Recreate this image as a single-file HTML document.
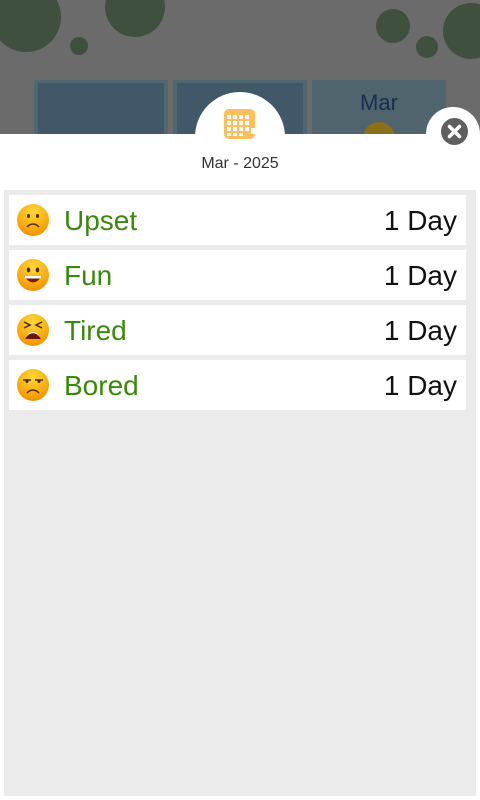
<!DOCTYPE html>
<html><head><meta charset="utf-8"><style>
*{margin:0;padding:0;box-sizing:border-box}
body{width:480px;height:800px;overflow:hidden;background:#fff;position:relative;font-family:"Liberation Sans",Arial,sans-serif}
.a{position:absolute}
.c{position:absolute;border-radius:50%;background:#40503e}
.row{position:absolute;left:9px;width:457px;height:50px;background:#fff}
.emo{position:absolute;left:8px;top:9px}
.lbl{position:absolute;left:55px;top:10px;font-size:28px;color:#3a8a0a;font-family:"Liberation Sans",Arial,sans-serif}
.val{position:absolute;right:9px;top:10px;font-size:28px;color:#111;font-family:"Liberation Sans",Arial,sans-serif}
</style></head><body>
<svg width="0" height="0" style="position:absolute"><defs><radialGradient id="g" cx="50%" cy="25%" r="75%"><stop offset="0" stop-color="#ffd83a"/><stop offset="0.7" stop-color="#f9a90c"/><stop offset="1" stop-color="#f29000"/></radialGradient></defs></svg>
<div class="a" style="left:0;top:0;width:480px;height:134px;background:#6b6b6b;overflow:hidden">
<div class="c" style="left:-9px;top:-18px;width:70px;height:70px"></div>
<div class="c" style="left:105px;top:-23px;width:60px;height:60px"></div>
<div class="c" style="left:70px;top:37px;width:18px;height:18px"></div>
<div class="c" style="left:376px;top:9px;width:34px;height:34px"></div>
<div class="c" style="left:416px;top:36px;width:22px;height:22px"></div>
<div class="c" style="left:443px;top:3px;width:56px;height:56px"></div>
<div class="a" style="left:34px;top:80px;width:134px;height:60px;background:#4f6870;padding:3px 4px 0"><div style="width:100%;height:100%;background:#405868"></div></div>
<div class="a" style="left:173px;top:80px;width:134px;height:60px;background:#4f6870;padding:3px 4px 0"><div style="width:100%;height:100%;background:#405868"></div></div>
<div class="a" style="left:312px;top:80px;width:134px;height:60px;background:#4f646c"></div>
<div class="a" style="left:312px;top:90px;width:134px;text-align:center;font-size:22px;color:#1a2f50">Mar</div>
<div class="a" style="left:363px;top:122px;width:32px;height:32px;border-radius:50%;background:#8a7018"></div>
</div>
<div class="a" style="left:195px;top:92px;width:90px;height:90px;border-radius:50%;background:#fff"></div>
<svg class="a" style="left:223px;top:108px" width="34" height="32" viewBox="0 0 34 32"><rect x="1" y="1" width="31" height="30" rx="5" fill="#ffbe5c"/><g fill="#fff"><rect x="4" y="7" width="4" height="4"/><rect x="10" y="7" width="4" height="4"/><rect x="16" y="7" width="4" height="4"/><rect x="22" y="7" width="4" height="4"/><rect x="4" y="13" width="4" height="4"/><rect x="10" y="13" width="4" height="4"/><rect x="16" y="13" width="4" height="4"/><rect x="22" y="13" width="4" height="4"/><rect x="4" y="19" width="4" height="4"/><rect x="10" y="19" width="4" height="4"/><rect x="16" y="19" width="4" height="4"/><rect x="22" y="19" width="4" height="4"/><rect x="4" y="25" width="4" height="3"/><rect x="10" y="25" width="4" height="3"/><rect x="16" y="25" width="4" height="3"/><rect x="28" y="20" width="4" height="6"/></g></svg>
<div class="a" style="left:426px;top:107px;width:54px;height:54px;border-radius:50%;background:#fff"></div>
<div class="a" style="left:441px;top:118px;width:27px;height:27px;border-radius:50%;background:#5f5f5f"></div>
<svg class="a" style="left:441px;top:118px" width="27" height="27"><path d="M8.5 8.5L18.5 18.5M18.5 8.5L8.5 18.5" stroke="#fff" stroke-width="3.5" stroke-linecap="round"/></svg>
<div class="a" style="left:0;top:155px;width:480px;text-align:center;font-size:16px;color:#333">Mar - 2025</div>
<div class="a" style="left:4px;top:190px;width:472px;height:606px;background:#ebebeb"></div>
<div class="row" style="top:195px"><svg class="emo" width="32" height="32"><circle cx="16" cy="16" r="16" fill="url(#g)"/><ellipse cx="11.5" cy="12" rx="1.5" ry="2" fill="#4a2a10"/><ellipse cx="20.5" cy="12" rx="1.5" ry="2" fill="#4a2a10"/><path d="M10 23Q16 17 22 23" stroke="#4a2a10" stroke-width="1.5" fill="none"/></svg><div class="lbl">Upset</div><div class="val">1 Day</div></div>
<div class="row" style="top:250px"><svg class="emo" width="32" height="32"><circle cx="16" cy="16" r="16" fill="url(#g)"/><ellipse cx="11.5" cy="11" rx="1.7" ry="2.5" fill="#4a2a10"/><ellipse cx="20.5" cy="11" rx="1.7" ry="2.5" fill="#4a2a10"/><path d="M7 17Q16 30 25 17Z" fill="#7a1a10"/><path d="M7.5 17L24.5 17L23.5 19.5L8.5 19.5Z" fill="#fff"/></svg><div class="lbl">Fun</div><div class="val">1 Day</div></div>
<div class="row" style="top:305px"><svg class="emo" width="32" height="32"><circle cx="16" cy="16" r="16" fill="url(#g)"/><path d="M7 8L13 11L7 14M25 8L19 11L25 14" stroke="#4a2a10" stroke-width="1.5" fill="none"/><path d="M8 25Q16 13 24 25Z" fill="#6a1410"/><path d="M10 21.5Q16 17 22 21.5L21 20Q16 16 11 20Z" fill="#fff"/></svg><div class="lbl">Tired</div><div class="val">1 Day</div></div>
<div class="row" style="top:360px"><svg class="emo" width="32" height="32"><circle cx="16" cy="16" r="16" fill="url(#g)"/><path d="M6 11L14 11M18 11L26 11" stroke="#4a2a10" stroke-width="1.5"/><circle cx="10" cy="12.5" r="1.5" fill="#4a2a10"/><circle cx="22" cy="12.5" r="1.5" fill="#4a2a10"/><path d="M10 24Q16 18 22 24" stroke="#4a2a10" stroke-width="1.5" fill="none"/></svg><div class="lbl">Bored</div><div class="val">1 Day</div></div>
</body></html>
